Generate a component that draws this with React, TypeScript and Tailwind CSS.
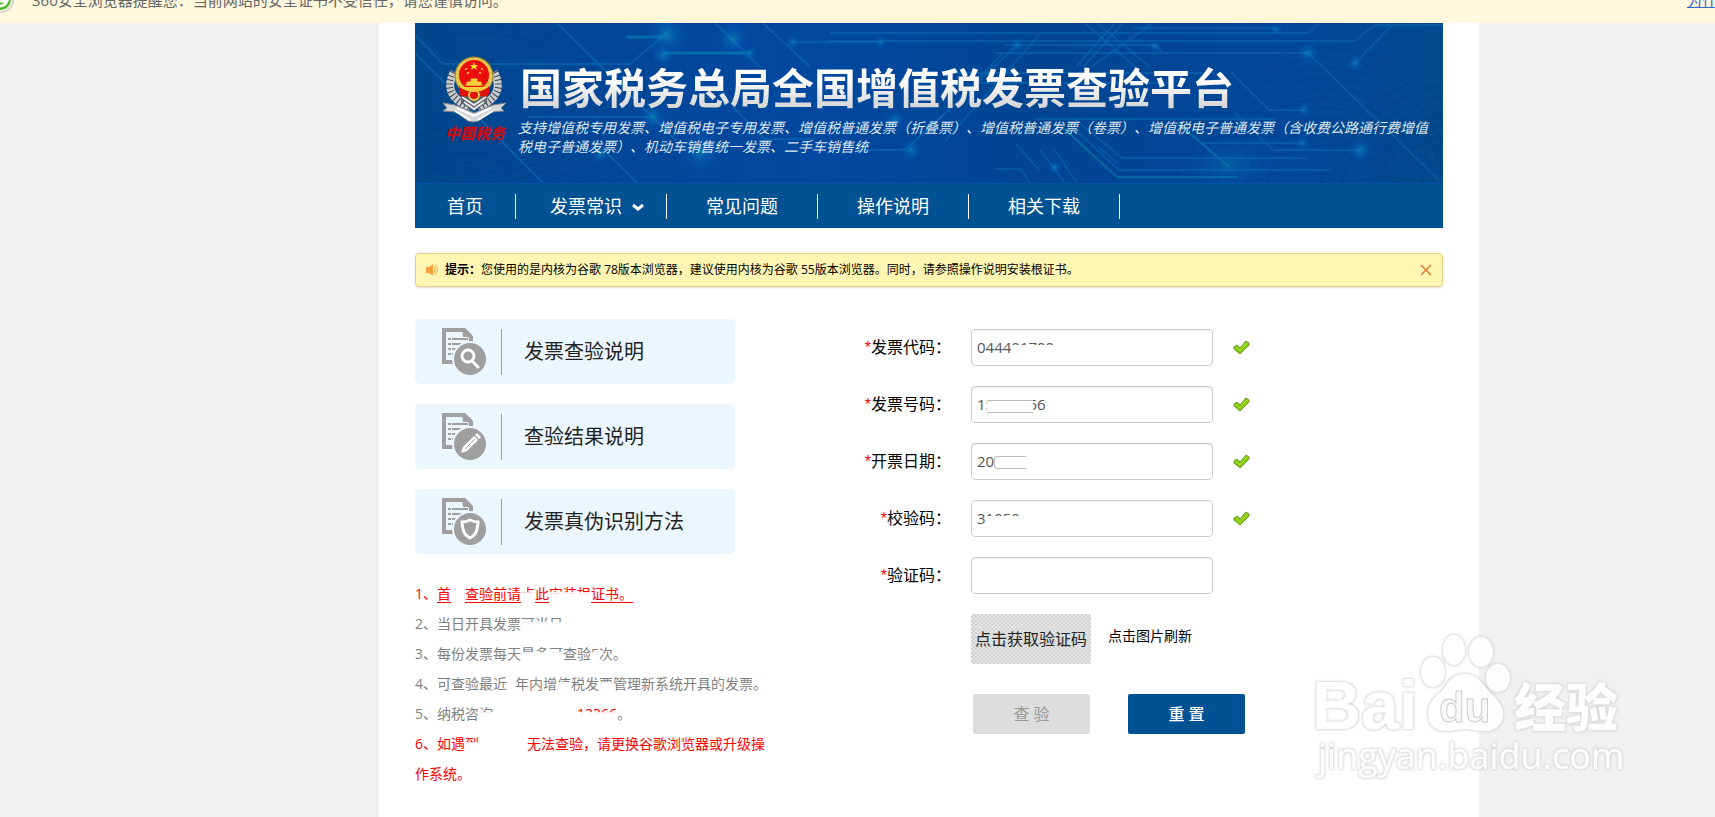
"use client";

import { useState } from "react";
import type { ReactNode } from "react";

const links = ["常见问题", "操作说明", "相关下载"];

function BannerArt() {
  return (
    <svg
      className="absolute inset-0 w-full h-full"
      viewBox="0 0 1028 160"
      preserveAspectRatio="xMidYMid slice"
      aria-hidden="true"
    >
      <defs>
        <linearGradient id="sky" x1="0" y1="0" x2="1" y2="0">
          <stop offset="0" stopColor="#00488a" />
          <stop offset="0.12" stopColor="#014796" />
          <stop offset="0.4" stopColor="#0048a0" />
          <stop offset="0.6" stopColor="#014592" />
          <stop offset="0.85" stopColor="#01489a" />
          <stop offset="1" stopColor="#004a8c" />
        </linearGradient>
        <radialGradient id="glow">
          <stop offset="0" stopColor="#0a8fb4" stopOpacity="0.7" />
          <stop offset="0.4" stopColor="#0a6fc4" stopOpacity="0.35" />
          <stop offset="1" stopColor="#0550c0" stopOpacity="0" />
        </radialGradient>
      </defs>
      <rect width="1028" height="160" fill="url(#sky)" />
      <g fill="none" stroke="#003a80" strokeOpacity="0.5">
        {[60, 70, 80, 90, 100, 110, 120, 130, 140, 150].map((r) => (
          <g key={r}>
            <ellipse cx="910" cy="175" rx={r} ry={r} />
            <ellipse cx="1050" cy="200" rx={r} ry={r} />
            <ellipse cx="60" cy="60" rx={r + 40} ry={r - 10} />
          </g>
        ))}
      </g>
      <g fill="none" stroke="#0b6fb8" strokeWidth="2" strokeOpacity="0.55">
        <path d="M0 12 28 41H182L215 41 252 10" />
        <path d="M0 30 128 160" />
        <path d="M142 0 262 118" />
        <path d="M112 94H238" />
        <path d="M192 130 222 160" />
        <path d="M212 14H248M248 30H335" stroke="#0b8fb8" strokeWidth="3" />
        <path d="M300 0 345 44 M348 0 395 44M378 19H466" />
        <path d="M318 84 350 116 H400M440 127H490L530 90" />
      </g>
      <g fill="none" stroke="#0b6cb4" strokeOpacity="0.5" strokeWidth="2">
        <path d="M415 10H893L905 0M415 18H940L960 2H1028" />
        <path d="M940 40 976 3M719 5H861" />
        <path d="M661 44 700 0M668 44 708 0M676 44 738 0" />
        <path d="M670 0 720 44M682 0 735 44" />
        <path d="M590 22H740L748 30H893M580 30H840" />
        <path d="M600 24 520 100M626 10 530 118M588 30 550 70" />
        <path d="M893 30 1024 157" />
        <path d="M816 49 854 87H889" />
        <path d="M540 50H800M560 60H760M620 96H860" />
        <path d="M787 120H885M820 90 858 127H945" />
        <path d="M763 100 814 144" stroke="#0b8aac" />
        <path d="M660 96 707 135H891" />
        <path d="M655 102 704 147H915" />
        <path d="M645 102 702 154H822" stroke="#0b8aac" />
        <path d="M640 127 662 160M625 127 650 160M580 146H605L615 160" />
        <path d="M684 124 702 140M600 120 625 148" />
      </g>
      <g fill="url(#glow)">
        <circle cx="252" cy="12" r="24" />
        <circle cx="248" cy="32" r="12" />
        <circle cx="318" cy="16" r="18" />
        <circle cx="335" cy="30" r="8" />
        <circle cx="238" cy="94" r="16" />
        <circle cx="185" cy="130" r="12" />
        <circle cx="285" cy="128" r="22" />
        <circle cx="378" cy="19" r="8" />
        <circle cx="466" cy="19" r="7" />
        <circle cx="496" cy="127" r="12" />
        <circle cx="480" cy="97" r="12" />
        <circle cx="602" cy="22" r="8" />
        <circle cx="740" cy="23" r="7" />
        <circle cx="861" cy="6" r="7" />
        <circle cx="893" cy="30" r="12" />
        <circle cx="940" cy="40" r="9" />
        <circle cx="889" cy="87" r="8" />
        <circle cx="887" cy="120" r="8" />
        <circle cx="945" cy="127" r="13" />
        <ellipse cx="814" cy="142" rx="50" ry="30" fillOpacity="0.5" />
        <circle cx="640" cy="144" r="8" />
      </g>
    </svg>
  );
}

function Emblem() {
  return (
    <svg width="66" height="68" viewBox="0 0 66 68" aria-hidden="true">
      {/* trigo prateado */}
      <g fill="none" stroke="#c9cdd0" strokeWidth="8">
        <path d="M12 17C4 32 8 44 28 52" />
        <path d="M52 17C60 32 56 44 36 52" />
      </g>
      <g fill="none" stroke="#3a4044" strokeWidth="7" strokeDasharray="1 3">
        <path d="M11 17C3 32 8 44 28 52" />
        <path d="M53 17C61 32 56 44 36 52" />
      </g>
      <path d="M19 38h26v10L32 56 19 48z" fill="#5d646a" />
      <path d="M20 42l12 8 12-8M22 47l10 7 10-7" fill="none" stroke="#e6e8ea" strokeWidth="2" />
      <path
        d="M1 48l12 2 19 8 19-8 13-2-5 5 3 3-13 1-13 9-5 1-5-1-12-9-13-1 4-3z"
        fill="#d4d6d8"
        stroke="#85888b"
      />
      <path d="M15 53 32 61 49 53M13 56l15 9M51 56l-15 9" fill="none" stroke="#fff" strokeWidth="2" />
      <circle cx="32" cy="21" r="19" fill="#e0bd45" stroke="#9b8428" />
      <circle cx="32" cy="21" r="17" fill="none" stroke="#f8e68a" strokeDasharray="2 2" />
      <circle cx="32" cy="20" r="15" fill="#ee0d0d" />
      <path d="M17 31q15 10 30 0v8q-3 4-8 2l-7 3-7-3q-5 2-8-2z" fill="#e0120c" />
      <path d="M18 32q14 9 28 0M23 30h18M25 27h14v3H25zM29 24h6v3h-6z" fill="#f5cf3a" stroke="#f5cf3a" />
      <path d="M32 7l1 3h3l-2 2 1 3-3-2-3 2 1-3-2-2h3z" fill="#ffdb3d" />
      <circle cx="24" cy="14" r="1" fill="#ffdb3d" />
      <circle cx="40" cy="14" r="1" fill="#ffdb3d" />
      <circle cx="26" cy="18" r="1" fill="#ffdb3d" />
      <circle cx="38" cy="18" r="1" fill="#ffdb3d" />
      <circle cx="32" cy="40" r="5" fill="none" stroke="#e9c63d" strokeWidth="2" />
    </svg>
  );
}

function DocIcon({ kind }: { kind: string }) {
  return (
    <svg width="46" height="48" viewBox="0 0 46 48" aria-hidden="true">
      <path d="M2 2h20l7 7v15M2 0v34h12" fill="none" stroke="#9f9fa0" strokeWidth="4" />
      <path d="M20 0h3l7 7v2h-9z" fill="#9f9fa0" />
      <g stroke="#9f9fa0" strokeWidth="2">
        <path d="M6 11h3M10 11h16M6 16h3M10 16h13M6 21h3M10 21h5M6 26h3M10 26h2" />
      </g>
      <circle cx="28" cy="31" r="18" fill="#ebf6ff" />
      <circle cx="28" cy="31" r="16" fill="#9f9fa0" />
      {kind === "search" && (
        <g fill="none" stroke="#fff" strokeWidth="3" strokeLinecap="round">
          <circle cx="26" cy="28" r="6" />
          <path d="M30 33l6 6" />
        </g>
      )}
      {kind === "edit" && (
        <g fill="#fff">
          <path d="M19 40l2-6 11-11 4 4-11 11z" />
          <path d="M33 22l2-2 4 4-2 2z" />
          <path d="M23 36l10-10" stroke="#9f9fa0" />
        </g>
      )}
      {kind === "shield" && (
        <path
          d="M28 22q-4 2-8 2 0 3 1 7 1 6 7 9 6-3 7-9 1-4 1-7-4 0-8-2z"
          fill="none"
          stroke="#fff"
          strokeWidth="3"
        />
      )}
    </svg>
  );
}

function Check() {
  return (
    <svg className="ml-5" width="17" height="16" viewBox="0 0 17 16" role="img" aria-label="正确">
      <path
        d="M1 7l3-2 3 3 6-7 3 2v2L7 14 1 9z"
        fill="#86cc0c"
        stroke="#6a9a2a"
        strokeLinejoin="round"
      />
      <path d="M3 7l4 4 7-8" fill="none" stroke="#a8e03c" strokeWidth="1" />
    </svg>
  );
}

// trecho apagado do texto: só sobra uma faixa das letras
function Blot({ children }: { children: ReactNode }) {
  return (
    <span className="relative">
      {children}
      <span className="absolute inset-x-0 top-2 bottom-0 bg-linear-to-b from-white/80 to-white to-30%" />
    </span>
  );
}

function Watermark() {
  return (
    <svg
      className="absolute right-[80px] top-[630px] pointer-events-none opacity-90"
      width="330"
      height="160"
      viewBox="0 0 330 160"
      role="img"
      aria-label="Baidu 经验 jingyan.baidu.com"
    >
      <defs>
        <filter id="edge" x="-5%" y="-5%" width="110%" height="110%">
          <feMorphology in="SourceAlpha" operator="dilate" radius="1" />
          <feGaussianBlur stdDeviation="1" />
          <feComponentTransfer result="halo">
            <feFuncR type="linear" slope="0" intercept="0.68" />
            <feFuncG type="linear" slope="0" intercept="0.68" />
            <feFuncB type="linear" slope="0" intercept="0.68" />
          </feComponentTransfer>
          <feMerge>
            <feMergeNode in="halo" />
            <feMergeNode in="SourceGraphic" />
          </feMerge>
        </filter>
      </defs>
      <g fill="#fff" filter="url(#edge)">
        <text x="7" y="99" fontSize="68" fontWeight="700" fontFamily="Liberation Sans, sans-serif">
          Bai
        </text>
        <ellipse cx="128" cy="42" rx="12" ry="15" />
        <ellipse cx="149" cy="20" rx="11" ry="15" />
        <ellipse cx="176" cy="22" rx="12" ry="15" />
        <ellipse cx="193" cy="48" rx="12" ry="14" />
        <path d="M160 44c-10 0-15 5-20 13-5 7-17 13-17 27 0 11 8 17 17 17 8 0 13-2 20-2s12 2 20 2c10 0 18-6 18-17 0-13-13-20-18-27-6-8-10-13-20-13z" />
        <text x="209" y="97" fontSize="52" fontWeight="900" fontFamily="Noto Sans CJK SC, sans-serif">
          经验
        </text>
        <text x="13" y="139" fontSize="36" fontFamily="Open Sans, sans-serif">
          jingyan.baidu.com
        </text>
      </g>
      <text
        x="134"
        y="92"
        fontSize="42"
        fontWeight="700"
        fill="#f8f8f8"
        stroke="#c8c8c8"
        fontFamily="Liberation Sans, sans-serif"
      >
        du
      </text>
    </svg>
  );
}

export default function InvoiceCheckPage() {
  const [showTip, setShowTip] = useState(true);
  const [form, setForm] = useState({
    code: "044401700",
    number: "15327756",
    date: "20190",
    check: "31050",
    captcha: "",
  });

  const fields = [
    { name: "code", label: "发票代码", cover: "left-[40px] w-[46px] top-[16px] h-[12px]" },
    { name: "number", label: "发票号码", cover: "left-[16px] w-[46px] top-[14px] h-[13px] border-y border-[#bbb]" },
    { name: "date", label: "开票日期", cover: "left-[23px] w-[32px] top-[13px] h-[13px] border-y border-l rounded-l-sm border-[#bbb]" },
    { name: "check", label: "校验码", cover: "left-[15px] w-[38px] top-[16px] h-[12px]" },
    { name: "captcha", label: "验证码", cover: "" },
  ] as const;

  const handleChange = (e: React.ChangeEvent<HTMLInputElement>) => {
    const { name, value } = e.target;
    setForm({ ...form, [name]: value });
  };

  return (
    <div className="relative min-h-screen flex flex-col overflow-hidden bg-[#f1f1f1] font-['Open_Sans','Noto_Sans_CJK_SC',sans-serif] text-black">
      {/* Aviso do navegador */}
      <div className="h-[23px] overflow-hidden bg-[#fff8dc]">
        <div className="-mt-6 h-12 flex items-center text-[15px] text-[#666]">
          <svg className="-ml-3 shrink-0" width="26" height="28" viewBox="0 0 26 28" aria-hidden="true">
            <circle cx="13" cy="14" r="13" fill="#d8d8c8" />
            <circle cx="12" cy="13" r="12" fill="#fff" />
            <circle cx="12" cy="13" r="11" fill="#4db81e" />
            <path d="M5 15h14q-2 5-7 5-4 0-6-3" fill="none" stroke="#fff" strokeWidth="3" />
          </svg>
          <p className="ml-[18px] flex-1 truncate">
            360安全浏览器提醒您：当前网站的安全证书不受信任，请您谨慎访问。
          </p>
          <a href="#why" className="w-7 whitespace-nowrap text-[#3366cc] underline">
            为什么
          </a>
        </div>
      </div>

      <div className="flex-1 grid grid-cols-[379fr_minmax(0,1100px)_236fr]">
        <div className="col-start-2 bg-white px-9 pb-6">
          <header>
            <div className="relative h-40 overflow-hidden">
              <BannerArt />
              <div className="relative flex pl-[27px] pt-8">
                <div className="w-[66px] shrink-0 flex flex-col items-center">
                  <Emblem />
                  <span className="text-[15px] leading-5 font-black italic text-[#c80d14] whitespace-nowrap">
                    中国税务
                  </span>
                </div>
                <div className="ml-2.5 pt-[3px] flex-1">
                  <h1 className="pl-0.5 text-[42px] leading-[60px] font-bold whitespace-nowrap text-transparent bg-clip-text bg-linear-to-b from-white from-35% to-[#d8d8d8] to-80%">
                    国家税务总局全国增值税发票查验平台
                  </h1>
                  <p className="text-sm leading-[19px] italic text-[#dde6ee] pr-2 [text-spacing-trim:space-all]">
                    支持增值税专用发票、增值税电子专用发票、增值税普通发票（折叠票）、增值税普通发票（卷票）、增值税电子普通发票（含收费公路通行费增值税电子普通发票）、机动车销售统一发票、二手车销售统
                  </p>
                </div>
              </div>
            </div>
            <nav className="h-[45px] flex items-center border-t border-[#0053a6] bg-[#005293] text-lg text-white">
              <a href="#home" className="w-[101px] h-[25px] flex items-center justify-center border-r border-white">
                首页
              </a>
              <a href="#faq" className="w-[151px] h-[25px] flex items-center gap-2.5 pl-[34px] border-r border-white">
                发票常识
                <svg className="mt-0.5" width="13" height="9" viewBox="0 0 13 9" aria-hidden="true">
                  <path d="M1 2l5 4 5-4" fill="none" stroke="#fff" strokeWidth="3" />
                </svg>
              </a>
              {links.map((link) => (
                <a
                  key={link}
                  href="#page"
                  className="w-[151px] h-[25px] flex items-center justify-center border-r border-white"
                >
                  {link}
                </a>
              ))}
            </nav>
          </header>

          {showTip && (
            <div className="mt-[25px] h-[34px] flex items-center px-2.5 rounded-sm border border-[#e6cf85] bg-[#fff6b4] shadow-sm text-xs">
              <svg className="mr-1.5" width="13" height="12" viewBox="0 0 13 12" aria-hidden="true">
                <path d="M0 3h3v6H0zM3 3l4-3v12L3 9z" fill="#f7a23b" />
                <path d="M8 3q2 3 0 6M9 1q5 5 0 10" fill="none" stroke="#f7a23b" />
              </svg>
              <p className="flex-1">
                <b>提示：</b>
                您使用的是内核为谷歌 78版本浏览器，建议使用内核为谷歌 55版本浏览器。同时，请参照操作说明安装根证书。
              </p>
              <button type="button" aria-label="关闭" onClick={() => setShowTip(false)}>
                <svg width="12" height="12" viewBox="0 0 12 12">
                  <path d="M1 1l10 10M11 1L1 11" stroke="#e0782a" strokeWidth="1.5" />
                </svg>
              </button>
            </div>
          )}

          <div className="mt-8 grid grid-cols-[354px_1fr]">
            <section>
              <div className="w-80 space-y-5">
                {[
                  { kind: "search", title: "发票查验说明" },
                  { kind: "edit", title: "查验结果说明" },
                  { kind: "shield", title: "发票真伪识别方法" },
                ].map((card) => (
                  <a
                    key={card.kind}
                    href="#help"
                    className="h-[65px] flex items-center pl-[27px] rounded-[5px] bg-[#ebf6ff] text-xl text-[#222]"
                  >
                    <DocIcon kind={card.kind} />
                    <span className="ml-[13px] mr-[22px] w-px h-[46px] bg-[#9f9fa0]" />
                    {card.title}
                  </a>
                ))}
              </div>

              <ul className="mt-[25px] text-sm leading-[30px] text-[#7f7f7f]">
                <li className="text-[#f00]">
                  1、
                  <a href="#cert" className="underline underline-offset-3">
                    首<span className="inline-block w-3.5" />查验前请<Blot>点</Blot>此<Blot>安装根</Blot>证书。
                  </a>
                </li>
                <li>
                  2、当日开具发票<Blot>可当日</Blot>
                </li>
                <li>
                  3、每份发票每天<Blot>最多可</Blot>查验<Blot>5</Blot>次。
                </li>
                <li>
                  4、可查验最近<span className="inline-block w-2" />年内增<Blot>值</Blot>税发<Blot>票</Blot>管理新系统开具的发票。
                </li>
                <li>
                  5、纳税咨<Blot>询</Blot>
                  <span className="inline-block w-[84px]" />
                  <span className="text-[#f00]">
                    <Blot>12366</Blot>
                  </span>
                  。
                </li>
                <li className="text-[#f00]">
                  6、如遇<Blot>到</Blot>
                  <span className="inline-block w-12" />
                  无法查验，请更换谷歌浏览器或升级操作系统。
                </li>
              </ul>
            </section>

            {/* Formulário */}
            <form className="pt-2.5" onSubmit={(e) => e.preventDefault()}>
              <div className="space-y-5">
                {fields.map((field) => (
                  <div key={field.name} className="flex items-center">
                    <label htmlFor={field.name} className="w-[182px] text-right text-base">
                      <span className="font-['Liberation_Sans',sans-serif] text-[#f00]">*</span>
                      {field.label}：
                    </label>
                    <div className="relative ml-5 w-[242px]">
                      <input
                        id={field.name}
                        type="text"
                        name={field.name}
                        value={form[field.name]}
                        onChange={handleChange}
                        className="block w-full h-[37px] px-[5px] pb-0.5 rounded-sm border border-[#ccc] bg-white inset-shadow-2xs text-[15px] text-[#555]"
                      />
                      {field.cover && <span className={`absolute bg-white ${field.cover}`} />}
                    </div>
                    {field.cover && <Check />}
                  </div>
                ))}
              </div>

              <div className="mt-5 ml-[202px] flex items-center">
                <button
                  type="button"
                  className="w-[120px] h-[50px] rounded-xs text-base text-[#222] bg-[#e2e2e2] bg-[repeating-conic-gradient(#d2d2d2_0_25%,#e6e6e6_0_50%)] bg-size-[4px_4px] whitespace-nowrap"
                >
                  点击获取验证码
                </button>
                <span className="ml-[17px] pb-1.5 text-sm">点击图片刷新</span>
              </div>

              <div className="mt-[30px] ml-[204px] flex gap-[38px]">
                <button type="button" disabled className="w-[117px] h-10 rounded-xs bg-[#ddd] text-base text-[#999]">
                  查 验
                </button>
                <button type="reset" className="w-[117px] h-10 rounded-xs bg-[#005293] text-base font-medium text-white">
                  重 置
                </button>
              </div>
            </form>
          </div>
        </div>
      </div>

      <Watermark />
    </div>
  );
}
